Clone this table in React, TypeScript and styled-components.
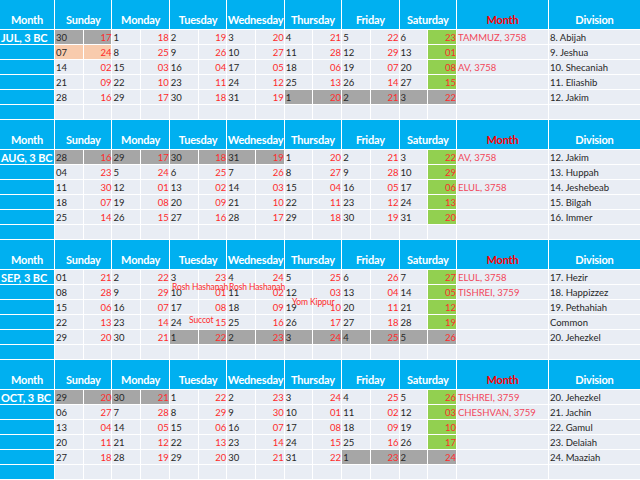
import styled, { createGlobalStyle } from 'styled-components';

const GlobalStyle = createGlobalStyle`
  body {
    margin: 0;
    background: #fff;
    font-family: Lato, 'Liberation Sans', sans-serif;
  }
`;

const BLUE = '#00b0f0';
const LIGHT = '#e9edf4';
const GRAY = '#a6a6a6';
const GREEN = '#92d050';
const PEACH = '#f8cbad';
const RED = '#ff2b2b';

type Mark = 'g' | 'p' | undefined;
type Day = [string, string, Mark?];
type Row = { days: Day[]; month?: string; div: string };
type Note = { text: string; x: number; y: number };
type Block = { label: string; rows: Row[]; notes?: Note[] };

const blocks: Block[] = [
  {
    label: 'JUL, 3 BC',
    rows: [
      { days: [['30', '17', 'g'], ['1', '18'], ['2', '19'], ['3', '20'], ['4', '21'], ['5', '22'], ['6', '23']], month: 'TAMMUZ, 3758', div: '8. Abijah' },
      { days: [['07', '24', 'p'], ['8', '25'], ['9', '26'], ['10', '27'], ['11', '28'], ['12', '29'], ['13', '01']], div: '9. Jeshua' },
      { days: [['14', '02'], ['15', '03'], ['16', '04'], ['17', '05'], ['18', '06'], ['19', '07'], ['20', '08']], month: 'AV, 3758', div: '10. Shecaniah' },
      { days: [['21', '09'], ['22', '10'], ['23', '11'], ['24', '12'], ['25', '13'], ['26', '14'], ['27', '15']], div: '11. Eliashib' },
      { days: [['28', '16'], ['29', '17'], ['30', '18'], ['31', '19'], ['1', '20', 'g'], ['2', '21', 'g'], ['3', '22', 'g']], div: '12. Jakim' },
    ],
  },
  {
    label: 'AUG, 3 BC',
    rows: [
      { days: [['28', '16', 'g'], ['29', '17', 'g'], ['30', '18', 'g'], ['31', '19', 'g'], ['1', '20'], ['2', '21'], ['3', '22']], month: 'AV, 3758', div: '12. Jakim' },
      { days: [['04', '23'], ['5', '24'], ['6', '25'], ['7', '26'], ['8', '27'], ['9', '28'], ['10', '29']], div: '13. Huppah' },
      { days: [['11', '30'], ['12', '01'], ['13', '02'], ['14', '03'], ['15', '04'], ['16', '05'], ['17', '06']], month: 'ELUL, 3758', div: '14. Jeshebeab' },
      { days: [['18', '07'], ['19', '08'], ['20', '09'], ['21', '10'], ['22', '11'], ['23', '12'], ['24', '13']], div: '15. Bilgah' },
      { days: [['25', '14'], ['26', '15'], ['27', '16'], ['28', '17'], ['29', '18'], ['30', '19'], ['31', '20']], div: '16. Immer' },
    ],
  },
  {
    label: 'SEP, 3 BC',
    rows: [
      { days: [['01', '21'], ['2', '22'], ['3', '23'], ['4', '24'], ['5', '25'], ['6', '26'], ['7', '27']], month: 'ELUL, 3758', div: '17. Hezir' },
      { days: [['08', '28'], ['9', '29'], ['10', '01'], ['11', '02'], ['12', '03'], ['13', '04'], ['14', '05']], month: 'TISHREI, 3759', div: '18. Happizzez' },
      { days: [['15', '06'], ['16', '07'], ['17', '08'], ['18', '09'], ['19', '10'], ['20', '11'], ['21', '12']], div: '19. Pethahiah' },
      { days: [['22', '13'], ['23', '14'], ['24', '15'], ['25', '16'], ['26', '17'], ['27', '18'], ['28', '19']], div: 'Common' },
      { days: [['29', '20'], ['30', '21'], ['1', '22', 'g'], ['2', '23', 'g'], ['3', '24', 'g'], ['4', '25', 'g'], ['5', '26', 'g']], div: '20. Jehezkel' },
    ],
    notes: [
      { text: 'Rosh Hashanah', x: 172, y: 43 },
      { text: 'Rosh Hashanah', x: 229, y: 43 },
      { text: 'Yom Kippur', x: 292, y: 58 },
      { text: 'Succot', x: 189, y: 76 },
    ],
  },
  {
    label: 'OCT, 3 BC',
    rows: [
      { days: [['29', '20', 'g'], ['30', '21', 'g'], ['1', '22'], ['2', '23'], ['3', '24'], ['4', '25'], ['5', '26']], month: 'TISHREI, 3759', div: '20. Jehezkel' },
      { days: [['06', '27'], ['7', '28'], ['8', '29'], ['9', '30'], ['10', '01'], ['11', '02'], ['12', '03']], month: 'CHESHVAN, 3759', div: '21. Jachin' },
      { days: [['13', '04'], ['14', '05'], ['15', '06'], ['16', '07'], ['17', '08'], ['18', '09'], ['19', '10']], div: '22. Gamul' },
      { days: [['20', '11'], ['21', '12'], ['22', '13'], ['23', '14'], ['24', '15'], ['25', '16'], ['26', '17']], div: '23. Delaiah' },
      { days: [['27', '18'], ['28', '19'], ['29', '20'], ['30', '21'], ['31', '22'], ['1', '23', 'g'], ['2', '24', 'g']], div: '24. Maaziah' },
    ],
  },
];

const weekdays = ['Sunday', 'Monday', 'Tuesday', 'Wednesday', 'Thursday', 'Friday', 'Saturday'];

const markColor = (m: Mark, fallback: string) =>
  m === 'g' ? GRAY : m === 'p' ? PEACH : fallback;

const Page = styled.div`
  display: flex;
  flex-direction: column;
  gap: 1px;
  width: 640px;
`;

const Sheet = styled.div`
  position: relative;
  display: grid;
  grid-template-columns: 54px repeat(14, 1fr) 91px 91px;
  grid-template-rows: 29px repeat(6, 14px);
  gap: 1px;
  background: #fff;
`;

const HeadCell = styled.div<{ $span?: number; $red?: boolean }>`
  grid-column: span ${(p) => p.$span ?? 1};
  background: ${BLUE};
  color: ${(p) => (p.$red ? '#ff0000' : '#fff')};
  font-weight: 700;
  font-size: 11px;
  letter-spacing: -0.2px;
  display: flex;
  align-items: flex-end;
  justify-content: center;
  padding-bottom: 3px;
  line-height: 12px;
  white-space: nowrap;
`;

const MonthCell = styled.div`
  background: ${BLUE};
  color: #fff;
  font-weight: 700;
  font-size: 11px;
  letter-spacing: -0.1px;
  line-height: 13px;
  padding: 1px 0 0 1px;
  white-space: nowrap;
`;

const Cell = styled.div<{ $bg?: string; $align?: 'left' | 'right'; $color?: string }>`
  background: ${(p) => p.$bg ?? LIGHT};
  color: ${(p) => p.$color ?? '#262626'};
  font-size: 9.5px;
  line-height: 12px;
  display: flex;
  align-items: flex-end;
  justify-content: ${(p) => (p.$align === 'right' ? 'flex-end' : 'flex-start')};
  padding-left: ${(p) => (p.$align === 'right' ? '0' : '1px')};
  white-space: nowrap;
`;

const HolidayNote = styled.span<{ $x: number; $y: number }>`
  position: absolute;
  left: ${(p) => p.$x}px;
  top: ${(p) => p.$y}px;
  color: ${RED};
  font-size: 8.5px;
  letter-spacing: -0.1px;
  line-height: 9px;
  white-space: nowrap;
  pointer-events: none;
`;

function DayPair({ g, h, m, saturday }: { g: string; h: string; m: Mark; saturday: boolean }) {
  return (
    <>
      <Cell $bg={markColor(m, LIGHT)}>{g}</Cell>
      <Cell $bg={markColor(m, saturday ? GREEN : LIGHT)} $align="right" $color={RED}>
        {h}
      </Cell>
    </>
  );
}

function CalendarRow({ row }: { row?: Row }) {
  if (!row) {
    return (
      <>
        {Array.from({ length: 16 }, (_, i) => (
          <Cell key={i} />
        ))}
      </>
    );
  }
  return (
    <>
      {row.days.map(([g, h, m], i) => (
        <DayPair key={i} g={g} h={h} m={m} saturday={i === 6} />
      ))}
      <Cell $color="#f2465a">{row.month ?? ''}</Cell>
      <Cell>{row.div}</Cell>
    </>
  );
}

function MonthBlock({ block }: { block: Block }) {
  const rows = [...block.rows, undefined];
  return (
    <Sheet>
      <HeadCell>Month</HeadCell>
      {weekdays.map((d) => (
        <HeadCell key={d} $span={2}>
          {d}
        </HeadCell>
      ))}
      <HeadCell $red>Month</HeadCell>
      <HeadCell>Division</HeadCell>
      {rows.map((row, i) => [
        <MonthCell key={`m${i}`}>{i === 0 ? block.label : ''}</MonthCell>,
        <CalendarRow key={`r${i}`} row={row} />,
      ])}
      {block.notes?.map((n, i) => (
        <HolidayNote key={i} $x={n.x} $y={n.y}>
          {n.text}
        </HolidayNote>
      ))}
    </Sheet>
  );
}

export default function App() {
  return (
    <>
      <GlobalStyle />
      <Page>
        {blocks.map((b) => (
          <MonthBlock key={b.label} block={b} />
        ))}
      </Page>
    </>
  );
}
